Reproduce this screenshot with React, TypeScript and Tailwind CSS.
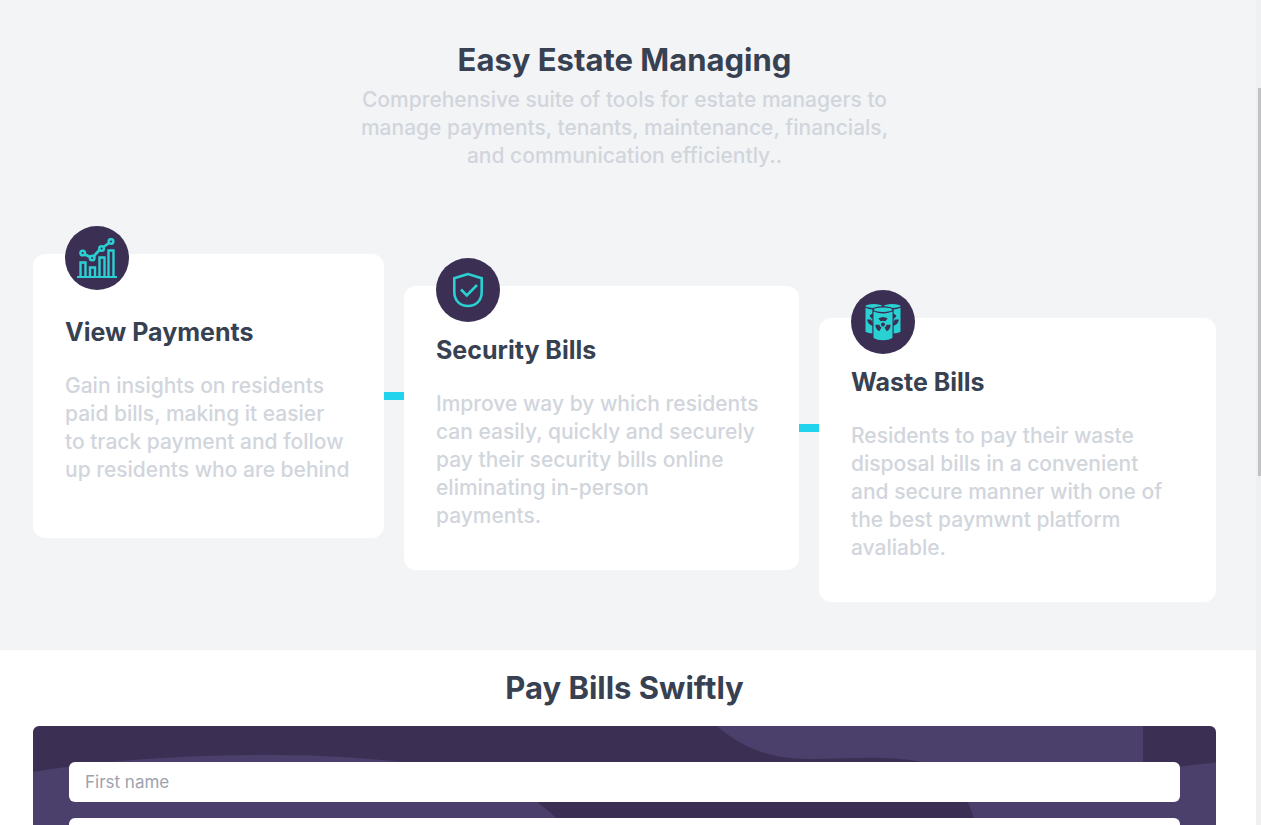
import type { ReactNode } from "react";

function ChartIcon() {
  return (
    <svg viewBox="0 0 40 40" className="size-10" fill="none" stroke="#2ad1d2" strokeWidth="2" aria-hidden="true">
      <path d="M0 39h40" />
      <path d="M3.500 38V24.500h5V38M13 38v-8.500h5V38M22.500 38V19.500h5V38M31.500 38V12.500h5V38" strokeWidth="2.400" />
      <path d="M8 16.500l5 2.500M17 18l5.500-6M26.500 9l5.500-4" strokeWidth="2.600" />
      <circle cx="5.700" cy="15" r="2.300" strokeWidth="2.500" />
      <circle cx="15.200" cy="20" r="2.300" strokeWidth="2.500" />
      <circle cx="24.600" cy="10.500" r="2.300" strokeWidth="2.500" />
      <circle cx="34" cy="3.500" r="2.300" strokeWidth="2.500" />
    </svg>
  );
}

function ShieldIcon() {
  return (
    <svg viewBox="0 0 40 40" className="size-10" fill="none" stroke="#2ad1d2" strokeWidth="2.600" aria-hidden="true">
      <path d="M20 4 6.300 8.300V22C6.300 31 12.500 36 20 36S33.700 31 33.700 22V8.300Z" />
      <path d="m13 19.500 5.800 5.800L29 15" />
    </svg>
  );
}

function BarrelsIcon() {
  return (
    <svg viewBox="0 0 40 40" className="size-10" fill="#2ad1d2" aria-hidden="true">
      <ellipse cx="10.800" cy="4" rx="8.300" ry="1.900" />
      <ellipse cx="29.200" cy="4" rx="8.300" ry="1.900" />
      <path d="M2.500 5.800Q6 7.600 10 7.500V31.500Q5 31.500 2.500 29.800Z" />
      <path d="M37.500 5.800Q34 7.600 30 7.500V31.500Q35 31.500 37.500 29.800Z" />
      <g fill="#3b3054">
        <path d="M10 11.500Q7.500 12.300 6.500 13.800L8.500 16.500 10 16ZM4 17.500h4L10 21v3Q5 22.500 4 17.500Z" />
        <path d="M30 11.500Q32.500 12.300 33.500 13.800L31.500 16.500 30 16ZM36 17.500h-4L30 21v3Q35 22.500 36 17.500Z" />
        <path d="M9.300 7.800Q10 4.300 20 4.300T30.700 7.800V38H9.300Z" />
      </g>
      <ellipse cx="20" cy="7.700" rx="9.200" ry="2.300" />
      <path d="M10.500 9.600Q20 13.400 29.500 9.600V36Q26 38.200 20 38.200T10.500 36Z" />
      <g fill="#3b3054">
        <circle cx="20" cy="22.500" r="2" />
        <path d="M17.800 19.300 15.300 16.400Q20 13.400 24.700 16.400l-2.500 2.900Q20 18 17.800 19.300Z" />
        <path d="M16.400 22.700h-4.100q.3 4.800 4 6.600l2.200-3.700q-1.900-1-2.100-2.900ZM23.600 22.700h4.100q-.3 4.800-4 6.600l-2.200-3.700q1.900-1 2.100-2.900Z" />
      </g>
    </svg>
  );
}

type CardProps = { title: string; lines: string[]; icon: ReactNode; className: string };

function FeatureCard({ title, lines, icon, className }: CardProps) {
  return (
    <article className={`relative flex flex-col justify-center gap-6 rounded-xl bg-white px-8 pt-12 pb-10 ${className}`}>
      <div className="absolute -top-7 left-8 flex size-16 items-center justify-center rounded-full bg-[#3b3054]">
        {icon}
      </div>
      <h3 className="text-[25px] leading-8 font-bold whitespace-nowrap">{title}</h3>
      <p className="text-[21px] leading-7 font-medium whitespace-nowrap text-gray-300">
        {lines.map((line) => (
          <span key={line} className="block">{line}</span>
        ))}
      </p>
    </article>
  );
}

function Connector({ className }: { className: string }) {
  return (
    <div className={`flex items-center ${className}`}>
      <div className="h-2 w-full bg-[#22d3ee]" />
    </div>
  );
}

function Waves() {
  return (
    <svg className="absolute inset-0 size-full" aria-hidden="true">
      <defs>
        <pattern id="waves" width="1110" height="600" patternUnits="userSpaceOnUse">
          <rect width="1110" height="600" fill="#3b3054" />
          <path d="M0 46C75 34 150 29 240 29C290 29 330 32 368 36C430 44 475 55 504 76Q550 110 570 160V600H0Z" fill="#4b3f6b" />
          <path d="M684 0C705 18 732 33 777 33C815 33 855 29 888 36C920 43 925 55 935 76Q950 115 965 170L1000 600H1110V0Z" fill="#4b3f6b" />
        </pattern>
      </defs>
      <rect width="100%" height="100%" fill="url(#waves)" />
    </svg>
  );
}

const fields = ["First name", "Last name", "Email", "Phone number"];

export default function App() {
  return (
    <div className="flex h-screen overflow-hidden bg-white font-['Inter','Noto_Sans',sans-serif] text-[#374151]">
      <main className="min-w-0 flex-1">
        <section className="bg-gray-100 pt-10 pr-10 pb-12 pl-[33px]">
          <header className="text-center">
            <h2 className="text-[31px] leading-10 font-bold">Easy Estate Managing</h2>
            <p className="mt-[6px] text-[21px] leading-7 font-medium text-gray-300">
              <span className="block">Comprehensive suite of tools for estate managers to</span>
              <span className="block">manage payments, tenants, maintenance, financials,</span>
              <span className="block">and communication efficiently..</span>
            </p>
          </header>
          <div className="mt-[84px] grid grid-cols-[351fr_20px_395fr_20px_397fr]">
            <FeatureCard
              className="mb-16"
              icon={<ChartIcon />}
              title="View Payments"
              lines={["Gain insights on residents", "paid bills, making it easier", "to track payment and follow", "up residents who are behind"]}
            />
            <Connector className="mb-16" />
            <FeatureCard
              className="my-8"
              icon={<ShieldIcon />}
              title="Security Bills"
              lines={["Improve way by which residents", "can easily, quickly and securely", "pay their security bills online", "eliminating in-person", "payments."]}
            />
            <Connector className="my-8" />
            <FeatureCard
              className="mt-16"
              icon={<BarrelsIcon />}
              title="Waste Bills"
              lines={["Residents to pay their waste", "disposal bills in a convenient", "and secure manner with one of", "the best paymwnt platform", "avaliable."]}
            />
          </div>
        </section>
        <section className="pt-[18px] pr-10 pl-[33px]">
          <h2 className="text-center text-[31px] leading-10 font-bold">Pay Bills Swiftly</h2>
          <form className="relative mt-[18px] overflow-hidden rounded-md p-9">
            <Waves />
            <div className="relative flex flex-col gap-4">
              {fields.map((field) => (
                <input
                  key={field}
                  type="text"
                  aria-label={field}
                  placeholder={field}
                  className="h-10 w-full rounded-md bg-white px-4 text-[17px] placeholder:text-[#9ca3af]"
                />
              ))}
            </div>
          </form>
        </section>
      </main>
      <div className="flex w-[5px] flex-col bg-[#f0f0f0] pt-[88px] pl-[2px]" aria-hidden="true">
        <div className="h-[47vh] bg-[#c1c1c1]" />
      </div>
    </div>
  );
}
